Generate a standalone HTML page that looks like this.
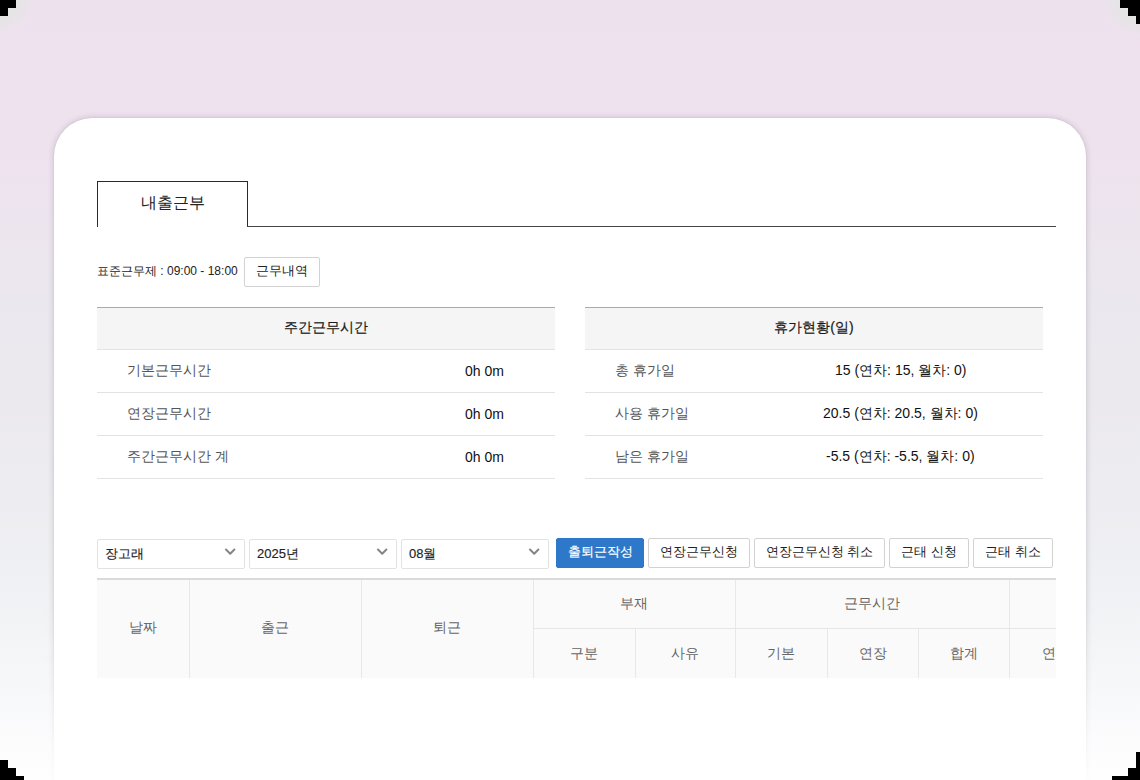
<!DOCTYPE html>
<html><head><meta charset="utf-8">
<style>
*{box-sizing:border-box;margin:0;padding:0}
html,body{width:1140px;height:780px;overflow:hidden}
body{font-family:"Liberation Sans",sans-serif;background:linear-gradient(180deg,#eee1ee 0px,#eee2ee 150px,#ece6ee 250px,#ebe9ee 400px,#eff0f3 570px,#f7f8fa 690px,#fcfcfd 740px,#fefefe 780px);position:relative;color:#111}
.corner{position:absolute;background:#000}
.shf{position:absolute;top:600px;height:180px;width:9px;background:linear-gradient(180deg,#eee1ee 0px,#eee2ee 150px,#ece6ee 250px,#ebe9ee 400px,#eff0f3 570px,#f7f8fa 690px,#fcfcfd 740px,#fefefe 780px);background-attachment:fixed;-webkit-mask-image:linear-gradient(180deg,rgba(0,0,0,0) 0%,rgba(0,0,0,0.9) 100%)}
.fringe{position:absolute;width:60px;height:60px}
.card{position:absolute;left:54px;top:118px;width:1032px;height:700px;background:#fff;border-radius:38px 38px 0 0;box-shadow:0 0 6px rgba(40,30,50,0.2),0 0 1px rgba(40,30,50,0.15)}
.tab{position:absolute;left:97px;top:181px;width:151px;height:46px;border:1px solid #2a2a2a;border-bottom:none;background:#fff;font-size:15.5px;text-align:center;line-height:42px;color:#222}
.tabline{position:absolute;left:247px;top:226px;width:809px;height:1px;background:#444}
.std{position:absolute;left:97px;top:263px;font-size:12px;color:#222}
.btn{position:absolute;height:30px;border:1px solid #d2d2d2;border-radius:2px;background:#fff;font-size:13px;text-align:center;line-height:26px;color:#222}
.sum{position:absolute;top:307px;width:458px;border-top:1px solid #aaa}
.sum .hd{height:42px;background:#f5f5f5;border-bottom:1px solid #e3e3e3;text-align:center;line-height:39px;font-size:14px;color:#1a1a1a;-webkit-text-stroke:0.2px #1a1a1a}
.sum .row{height:43px;border-bottom:1px solid #e3e3e3;position:relative;font-size:14px;line-height:40px}
.sum .row .k{position:absolute;left:30px;color:#555}
.sum .row .v{position:absolute;color:#111}
.sel{position:absolute;top:539px;height:30px;border:1px solid #e2e2e2;border-radius:2px;background:#fff;font-size:13px;line-height:27px;padding-left:7px;color:#222;-webkit-text-stroke:0.15px #222}
.sel svg{position:absolute;right:8px;top:7px}
.grid{position:absolute;left:97px;top:578px;width:959px;height:100px;background:#fafafa;border-top:2px solid #dadada;overflow:hidden}
.gc{position:absolute;font-size:14px;color:#666;text-align:center;line-height:16px}
.vl{position:absolute;width:1px;background:#e8e8e8}
.hl{position:absolute;height:1px;background:#e6e6e6}
</style></head><body>
<div class="fringe" style="left:0;top:0;background:radial-gradient(circle at 0 0,rgba(229,229,229,1) 0px,rgba(229,229,229,1) 18px,rgba(229,229,229,0) 34px)"></div>
<div class="fringe" style="right:0;top:0;background:radial-gradient(circle at 100% 0,rgba(229,229,229,1) 0px,rgba(229,229,229,1) 22px,rgba(229,229,229,0) 38px)"></div>
<div class="corner" style="left:0;top:0;width:16px;height:8px"></div>
<div class="corner" style="left:0;top:8px;width:8px;height:8px"></div>
<div class="corner" style="left:1120px;top:0;width:20px;height:8px"></div>
<div class="corner" style="left:1128px;top:8px;width:12px;height:8px"></div>
<div class="corner" style="left:1136px;top:16px;width:4px;height:8px"></div>

<div class="card"></div>
<div class="shf" style="left:45px"></div>
<div class="shf" style="left:1086px"></div>

<div class="corner" style="left:0;top:760px;width:8px;height:8px"></div>
<div class="corner" style="left:0;top:768px;width:16px;height:8px"></div>
<div class="corner" style="left:0;top:776px;width:24px;height:4px"></div>
<div class="corner" style="left:1136px;top:752px;width:4px;height:16px"></div>
<div class="corner" style="left:1128px;top:768px;width:12px;height:8px"></div>
<div class="corner" style="left:1112px;top:776px;width:28px;height:4px"></div>

<div class="tab">내출근부</div>
<div class="tabline"></div>

<div class="std">표준근무제 : 09:00 - 18:00</div>
<div class="btn" style="left:244px;top:257px;width:76px">근무내역</div>

<div class="sum" style="left:97px">
  <div class="hd">주간근무시간</div>
  <div class="row"><span class="k">기본근무시간</span><span class="v" style="left:368px;top:1px">0h 0m</span></div>
  <div class="row"><span class="k">연장근무시간</span><span class="v" style="left:368px;top:1px">0h 0m</span></div>
  <div class="row"><span class="k">주간근무시간 계</span><span class="v" style="left:368px;top:1px">0h 0m</span></div>
</div>
<div class="sum" style="left:585px">
  <div class="hd">휴가현황(일)</div>
  <div class="row"><span class="k">총 휴가일</span><span class="v" style="left:250px">15 (연차: 15, 월차: 0)</span></div>
  <div class="row"><span class="k">사용 휴가일</span><span class="v" style="left:238px">20.5 (연차: 20.5, 월차: 0)</span></div>
  <div class="row"><span class="k">남은 휴가일</span><span class="v" style="left:241px">-5.5 (연차: -5.5, 월차: 0)</span></div>
</div>

<div class="sel" style="left:97px;width:148px">장고래<svg width="12" height="9" viewBox="0 0 12 9"><path d="M2 2.5 L6.2 6.7 L10.4 2.5" fill="none" stroke="#858585" stroke-width="2" stroke-linecap="round" stroke-linejoin="round"/></svg></div>
<div class="sel" style="left:249px;width:148px">2025년<svg width="12" height="9" viewBox="0 0 12 9"><path d="M2 2.5 L6.2 6.7 L10.4 2.5" fill="none" stroke="#858585" stroke-width="2" stroke-linecap="round" stroke-linejoin="round"/></svg></div>
<div class="sel" style="left:401px;width:148px">08월<svg width="12" height="9" viewBox="0 0 12 9"><path d="M2 2.5 L6.2 6.7 L10.4 2.5" fill="none" stroke="#858585" stroke-width="2" stroke-linecap="round" stroke-linejoin="round"/></svg></div>
<div class="btn" style="left:556px;top:538px;width:88px;background:#2d78c8;border-color:#2d78c8;color:#fff;-webkit-text-stroke:0.2px #fff">출퇴근작성</div>
<div class="btn" style="left:648px;top:538px;width:102px">연장근무신청</div>
<div class="btn" style="left:754px;top:538px;width:131px">연장근무신청 취소</div>
<div class="btn" style="left:889px;top:538px;width:80px">근태 신청</div>
<div class="btn" style="left:973px;top:538px;width:80px">근태 취소</div>

<div class="grid">
  <div class="vl" style="left:92px;top:0;height:100px"></div>
  <div class="vl" style="left:264px;top:0;height:100px"></div>
  <div class="vl" style="left:436px;top:0;height:100px"></div>
  <div class="vl" style="left:638px;top:0;height:100px"></div>
  <div class="vl" style="left:912px;top:0;height:100px"></div>
  <div class="vl" style="left:538px;top:48px;height:52px"></div>
  <div class="vl" style="left:730px;top:48px;height:52px"></div>
  <div class="vl" style="left:821px;top:48px;height:52px"></div>
  <div class="hl" style="left:436px;top:48px;width:523px"></div>
  <div class="gc" style="left:0;width:92px;top:39px">날짜</div>
  <div class="gc" style="left:92px;width:172px;top:39px">출근</div>
  <div class="gc" style="left:264px;width:172px;top:39px">퇴근</div>
  <div class="gc" style="left:436px;width:202px;top:15px">부재</div>
  <div class="gc" style="left:638px;width:274px;top:15px">근무시간</div>
  <div class="gc" style="left:436px;width:102px;top:65px">구분</div>
  <div class="gc" style="left:538px;width:100px;top:65px">사유</div>
  <div class="gc" style="left:638px;width:92px;top:65px">기본</div>
  <div class="gc" style="left:730px;width:91px;top:65px">연장</div>
  <div class="gc" style="left:821px;width:91px;top:65px">합계</div>
  <div class="gc" style="left:912px;top:65px;text-align:left;padding-left:33px;width:200px">연장</div>
</div>
</body></html>
